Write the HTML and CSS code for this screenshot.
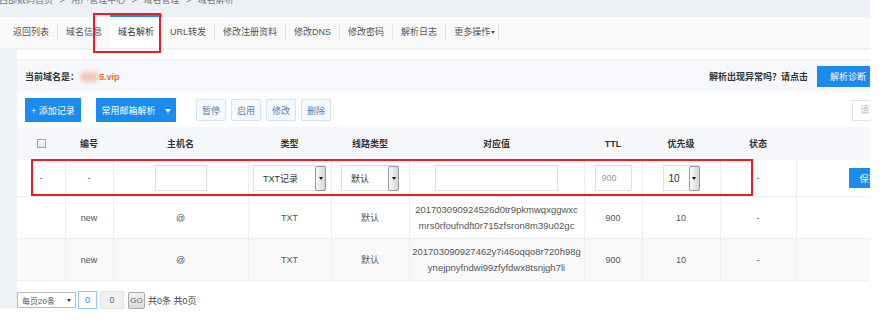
FILE: index.html
```html
<!DOCTYPE html>
<html lang="zh-CN">
<head>
    <meta charset="UTF-8">
    <title>域名解析</title>
    <link rel="stylesheet" href="styles.css">
</head>
<body>
    <div class="frame">
        <div class="page">
            <div class="crumb"><p>西部数码首页 &gt; 用户管理中心 &gt; 域名管理 &gt; 域名解析</p></div>

            <div class="tabs">
                <a class="tab">返回列表</a><i class="sep"></i>
                <a class="tab">域名信息</a>
                <a class="tab on">域名解析</a>
                <a class="tab">URL转发</a><i class="sep"></i>
                <a class="tab">修改注册资料</a><i class="sep"></i>
                <a class="tab">修改DNS</a><i class="sep"></i>
                <a class="tab">修改密码</a><i class="sep"></i>
                <a class="tab">解析日志</a><i class="sep"></i>
                <a class="tab more">更多操作<span class="caret"></span></a><i class="sep"></i>
            </div>

            <div class="wrap">
                <div class="main">
                    <div class="domain">
                        <div class="domain-name">
                            <b>当前域名是：</b><span class="blur"></span><span class="orange">5.vip</span>
                        </div>
                        <div class="domain-help">
                            <b>解析出现异常吗？请点击</b>
                            <button class="btn-blue diag">解析诊断</button>
                        </div>
                    </div>

                    <div class="toolbar">
                        <button class="btn-blue add">+ 添加记录</button>
                        <button class="btn-blue mail">常用邮箱解析<span class="tri"></span></button>
                        <button class="btn-line first">暂停</button>
                        <button class="btn-line">启用</button>
                        <button class="btn-line">修改</button>
                        <button class="btn-line">删除</button>
                        <input class="search" type="text" placeholder="请输入">
                    </div>

                    <table class="records">
                        <colgroup>
                            <col style="width:48px"><col style="width:48px"><col style="width:135px">
                            <col style="width:83px"><col style="width:78px"><col style="width:175px">
                            <col style="width:58px"><col style="width:78px"><col style="width:76px">
                            <col>
                        </colgroup>
                        <thead>
                            <tr>
                                <th><span class="check"></span></th>
                                <th>编号</th>
                                <th>主机名</th>
                                <th>类型</th>
                                <th>线路类型</th>
                                <th>对应值</th>
                                <th>TTL</th>
                                <th>优先级</th>
                                <th>状态</th>
                                <th></th>
                            </tr>
                        </thead>
                        <tbody>
                            <tr class="edit">
                                <td>-</td>
                                <td>-</td>
                                <td><input class="field host" type="text"></td>
                                <td><span class="sel type">TXT记录<i></i></span></td>
                                <td><span class="sel line">默认<i></i></span></td>
                                <td><input class="field value" type="text"></td>
                                <td><input class="field ttl" type="text" placeholder="900"></td>
                                <td><span class="sel prio">10<i></i></span></td>
                                <td>-</td>
                                <td class="act"><button class="btn-blue save">保存</button></td>
                            </tr>
                            <tr>
                                <td></td>
                                <td>new</td>
                                <td>@</td>
                                <td>TXT</td>
                                <td>默认</td>
                                <td class="val">201703090924526d0tr9pkmwqxggwxc<br>mrs0rfoufndft0r715zfsron8m39u02gc</td>
                                <td>900</td>
                                <td>10</td>
                                <td>-</td>
                                <td></td>
                            </tr>
                            <tr class="alt">
                                <td></td>
                                <td>new</td>
                                <td>@</td>
                                <td>TXT</td>
                                <td>默认</td>
                                <td class="val">201703090927462y7i46oqqo8r720h98g<br>ynejpnyfndwi99zfyfdwx8tsnjgh7li</td>
                                <td>900</td>
                                <td>10</td>
                                <td>-</td>
                                <td></td>
                            </tr>
                        </tbody>
                    </table>

                    <div class="pager">
                        <span class="pick">每页20条<b></b></span>
                        <input class="pg cur" type="text" value="0">
                        <input class="pg total" type="text" value="0">
                        <button class="go">GO</button>
                        <span class="count">共0条 共0页</span>
                    </div>
                </div>
            </div>
        </div>

        <div class="mark mark-tab"></div>
        <div class="mark mark-row"></div>
    </div>
</body>
</html>
```

FILE: styles.css
```css
body {
    margin: 0;
    background: #fff;
    font-family: "Liberation Sans", "Noto Sans CJK SC", sans-serif;
    font-size: 9px;
    color: #555;
}
.frame {
    position: relative;
    width: 870px;
    overflow: hidden;
}
.page {
    width: 895px;
}
.crumb {
    height: 17px;
    overflow: hidden;
    background: #edf0f5;
    color: #777;
}
.crumb p {
    margin: -5px 0 0 -1px;
    line-height: 10px;
    word-spacing: 4px;
}

/* tabs */
.tabs {
    display: flex;
    align-items: center;
    height: 31px;
    padding-left: 5px;
    background: #f9f9f9;
    border-bottom: 2px solid #f0f1f3;
}
.tab {
    align-self: stretch;
    padding: 0 8px;
    line-height: 31px;
    color: #555;
    white-space: nowrap;
}
.tab.on {
    margin-top: -2px;
    border-top: 2px solid #1a8cf0;
    background: #fff;
    color: #333;
}
.tab.more {
    padding-right: 3px;
}
.caret {
    display: inline-block;
    vertical-align: middle;
    margin-left: 1px;
    border-top: 3px solid #555;
    border-left: 2px solid transparent;
    border-right: 2px solid transparent;
}
.sep {
    width: 1px;
    height: 17px;
    background: #e4e4e4;
}

/* main area */
.wrap {
    display: flex;
    padding-left: 17px;
    background: #eef1f5;
}
.main {
    flex: 1;
    padding-top: 9px;
    background: #fff;
}
.domain {
    display: flex;
    align-items: center;
    justify-content: space-between;
    height: 34px;
    padding: 0 8px;
    box-sizing: border-box;
    background: #f6f8fb;
    border-top: 1px solid #eef0f3;
    color: #333;
}
.domain-name {
    display: flex;
    align-items: center;
}
.blur {
    display: inline-block;
    width: 19px;
    height: 10px;
    margin-left: 1px;
    border-radius: 5px;
    background: #f6c7b3;
    filter: blur(2px);
}
.orange {
    color: #f26b1d;
    font-weight: bold;
}
.domain-help {
    display: flex;
    align-items: center;
}
button {
    font-family: inherit;
    font-size: 9px;
    cursor: pointer;
}
.btn-blue {
    border: none;
    background: #1a8cf0;
    color: #fff;
    padding: 0;
}
.diag {
    width: 70px;
    height: 21px;
    margin-left: 9px;
    text-align: left;
    padding-left: 13px;
}

/* toolbar */
.toolbar {
    display: flex;
    align-items: center;
    height: 24px;
    margin-top: 5px;
    padding: 0 8px;
}
.add {
    width: 56px;
    height: 24px;
}
.mail {
    width: 80px;
    height: 24px;
    margin-left: 15px;
}
.tri {
    display: inline-block;
    vertical-align: middle;
    margin-left: 9px;
    border-top: 4px solid #fff;
    border-left: 3px solid transparent;
    border-right: 3px solid transparent;
}
.btn-line {
    width: 30px;
    height: 22px;
    margin-left: 5px;
    padding: 0;
    border: 1px solid #cfe3f6;
    border-radius: 2px;
    background: #f6fafe;
    color: #4f7fb8;
}
.btn-line.first {
    margin-left: 20px;
}
.search {
    width: 35px;
    height: 21px;
    margin-left: auto;
    padding: 0 0 0 7px;
    box-sizing: border-box;
    border: 1px solid #e2e2e2;
    font-size: 9px;
}
.search::placeholder {
    color: #bbb;
}

/* records table */
.records {
    width: 100%;
    margin-top: 5px;
    border-collapse: collapse;
    table-layout: fixed;
}
.records th {
    height: 33px;
    padding: 0;
    background: #f5f7fa;
    color: #333;
    font-weight: bold;
    text-align: center;
}
.records td {
    height: 41px;
    padding: 0;
    border: 1px solid #eee;
    text-align: center;
    color: #555;
}
.records td:first-child {
    border-left: none;
}
.records td:last-child {
    border-right: none;
}
.records tr.edit td {
    height: 36px;
    border-top: none;
}
.records tr.alt td {
    background: #f9f9f9;
}
.records td.val {
    font-size: 9.5px;
    line-height: 16px;
}
.records td.act {
    text-align: left;
    padding-left: 52px;
}
.check {
    display: inline-block;
    width: 7px;
    height: 7px;
    margin-top: 2px;
    border: 1px solid #a5a5a5;
    background: linear-gradient(#fff, #e2e2e2);
}
.field {
    display: block;
    height: 26px;
    margin: 0 auto;
    padding: 0 0 0 6px;
    box-sizing: border-box;
    border: 1px solid #e0e0e0;
    font-family: inherit;
    font-size: 9px;
}
.field.host { width: 52px; }
.field.value { width: 123px; }
.field.ttl { width: 37px; }
.field::placeholder {
    color: #999;
}
.sel {
    display: flex;
    align-items: center;
    justify-content: space-between;
    height: 26px;
    margin: 0 auto;
    padding-left: 9px;
    box-sizing: border-box;
    border: 1px solid #e0e0e0;
    background: #fff;
    color: #333;
    text-align: left;
}
.sel i {
    display: flex;
    align-items: center;
    justify-content: center;
    width: 11px;
    height: 25px;
    margin-right: -1px;
    box-sizing: border-box;
    border: 1px solid #9a9a9a;
    border-radius: 2px;
    background: linear-gradient(to right, #fafafa, #d4d4d4);
}
.sel i::after {
    content: "";
    border-top: 3px solid #111;
    border-left: 2px solid transparent;
    border-right: 2px solid transparent;
}
.sel.type { width: 73px; }
.sel.line { width: 58px; }
.sel.prio { width: 37px; padding-left: 5px; font-size: 10px; }
.save {
    width: 40px;
    height: 20px;
}

/* pager */
.pager {
    display: flex;
    align-items: center;
    height: 18px;
    margin-top: 10px;
}
.pick {
    display: flex;
    align-items: center;
    justify-content: space-between;
    width: 59px;
    height: 16px;
    padding-left: 4px;
    box-sizing: border-box;
    border: 1px solid #bbb;
    background: #fff;
    color: #555;
    font-size: 8px;
}
.pick b {
    margin-right: 4px;
    border-top: 3px solid #333;
    border-left: 2px solid transparent;
    border-right: 2px solid transparent;
}
.pg {
    height: 18px;
    padding: 0;
    box-sizing: border-box;
    text-align: center;
    font-family: inherit;
    font-size: 9px;
}
.pg.cur {
    width: 19px;
    margin-left: 2px;
    border: 1px solid #8ec6f3;
    color: #1a8cf0;
}
.pg.total {
    width: 24px;
    margin-left: 3px;
    border: 1px solid #e2e2e2;
    background: #f0f0f0;
    color: #666;
}
.go {
    width: 17px;
    height: 17px;
    margin-left: 4px;
    padding: 0;
    border: 1px solid #a9a9a9;
    border-radius: 2px;
    background: linear-gradient(#f3f3f3, #dcdcdc);
    color: #666;
    font-size: 8px;
}
.count {
    margin-left: 3px;
    color: #444;
}

/* red annotation boxes */
.mark {
    position: absolute;
    box-sizing: border-box;
    border: 2px solid #ea1c24;
}
.mark-tab {
    left: 93px;
    top: 13px;
    width: 68px;
    height: 40px;
}
.mark-row {
    left: 31px;
    top: 159px;
    width: 722px;
    height: 37px;
}
```
